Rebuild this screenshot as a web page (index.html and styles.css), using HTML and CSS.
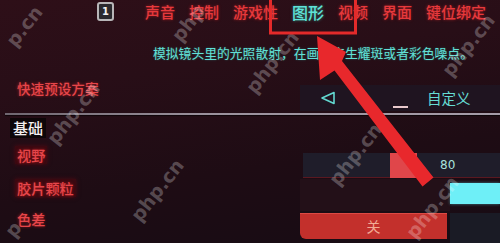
FILE: index.html
```html
<!DOCTYPE html>
<html lang="zh">
<head>
<meta charset="utf-8">
<title>图形设置</title>
<link rel="stylesheet" href="styles.css">
</head>
<body>
<div class="screen">
  <header class="topbar">
    <span class="key">1</span>
    <nav class="tabs">
      <span class="tab">声音</span>
      <span class="tab">控制</span>
      <span class="tab">游戏性</span>
      <span class="tab active">图形</span>
      <span class="tab">视频</span>
      <span class="tab">界面</span>
      <span class="tab">键位绑定</span>
    </nav>
  </header>

  <p class="desc">模拟镜头里的光照散射，在画面产生耀斑或者彩色噪点。</p>

  <section class="settings">
    <div class="row row-preset">
      <span class="label">快速预设方案</span>
      <div class="selector">
        <svg class="arrow-left" width="16" height="14" viewBox="0 0 16 14"><path d="M14 1.5 L2 7 L14 12.5 Z" fill="none" stroke="#62d8d0" stroke-width="1.6" stroke-linejoin="round"/></svg>
        <span class="dash"></span>
        <span class="value">自定义</span>
      </div>
    </div>

    <div class="divider"></div>

    <div class="group-title">基础</div>

    <div class="row row-fov">
      <span class="label label-box">视野</span>
      <div class="slider">
        <span class="thumb"></span>
        <span class="num">80</span>
      </div>
    </div>

    <div class="row row-grain">
      <span class="label label-box">胶片颗粒</span>
      <div class="grain-ctrl">
        <span class="grain-track"></span>
        <span class="grain-fill"></span>
      </div>
    </div>

    <div class="row row-ca">
      <span class="label">色差</span>
      <div class="toggle-ctrl">
        <span class="toggle">关</span>
        <span class="toggle-side"></span>
      </div>
    </div>
  </section>

  <div class="watermarks">
    <span class="wm wm1">p.cn</span>
    <span class="wm wm2">php</span>
    <span class="wm wm3">php.cn</span>
    <span class="wm wm4">php.cn</span>
    <span class="wm wm5">php.cn</span>
    <span class="wm wm6">php.cn</span>
    <span class="wm wm7">php.cn</span>
    <span class="wm wm8">php.cn</span>
    <span class="wm wm9">p</span>
  </div>

  <svg class="annot" width="500" height="243" viewBox="0 0 500 243">
    <rect x="270.5" y="-6" width="85" height="39" fill="none" stroke="#e42a2a" stroke-width="3"/>
    <polygon fill="#e8282c" points="317,36 346,52 342,61 433.5,177.5 422.5,186.5 334.5,70.5 320,80"/>
  </svg>
</div>
</body>
</html>
```

FILE: styles.css
```css
* { box-sizing: border-box; margin: 0; padding: 0; }

html, body {
  width: 500px;
  height: 243px;
  overflow: hidden;
}

body {
  font-family: "Noto Sans CJK SC", "Noto Sans", sans-serif;
  background: #1c0c13;
}

.screen {
  position: relative;
  width: 500px;
  height: 243px;
  overflow: hidden;
  background: linear-gradient(172deg, #2e0f18 0%, #280e17 30%, #1e0c14 65%, #170c14 100%);
}

/* top bar */
.topbar {
  display: flex;
  align-items: flex-start;
  height: 24px;
  padding: 2px 0 0 97px;
}

.key {
  width: 17px;
  height: 19px;
  border: 2px solid #b8b6b8;
  border-radius: 3px;
  background: #2a292e;
  color: #f2f2f2;
  font-family: "DejaVu Sans", sans-serif;
  font-weight: bold;
  font-size: 10px;
  line-height: 15px;
  text-align: center;
}

.tabs {
  display: flex;
  gap: 14px;
  margin-left: 31px;
  margin-top: 1px;
}

.tab {
  font-size: 15px;
  font-weight: 500;
  line-height: 18px;
  color: #e6393c;
  text-shadow: 0 0 3px rgba(255, 40, 40, 0.55);
}

.tab.active {
  color: #5fe2d8;
  text-shadow: 0 0 3px rgba(60, 230, 220, 0.5);
  font-size: 16px;
}

/* description */
.desc {
  margin-top: 21px;
  padding-left: 153px;
  font-size: 12.8px;
  line-height: 16px;
  color: #62e0d6;
  white-space: nowrap;
  text-shadow: 0 0 2px rgba(40, 220, 210, 0.4);
}

/* settings */
.settings {
  margin-top: 19px;
}

.row {
  display: grid;
  grid-template-columns: 300px 200px;
  align-items: start;
}

.label {
  justify-self: start;
  margin-left: 17px;
  font-size: 14.2px;
  font-weight: 500;
  line-height: 18px;
  color: #e6464a;
  text-shadow: 0 0 3px rgba(255, 40, 40, 0.6);
}

.label-box {
  padding: 0 2px;
  margin-left: 15px;
  background: rgba(70, 8, 16, 0.7);
  box-shadow: 0 0 4px rgba(90, 10, 20, 0.8);
}

.row-preset {
  height: 33px;
}

.row-preset .label {
  margin-top: -1px;
  font-size: 13.6px;
}

.selector {
  display: flex;
  align-items: center;
  height: 26px;
  margin-top: 5px;
  padding-left: 20px;
  background: #1f1420;
}

.arrow-left {
  flex: none;
}

.dash {
  width: 15px;
  height: 2px;
  margin-left: 57px;
  margin-top: 18px;
  background: #e8c8cc;
}

.value {
  margin-left: 19px;
  font-size: 14.5px;
  line-height: 18px;
  color: #66dcd4;
}

.divider {
  height: 2px;
  margin-left: 5px;
  background: linear-gradient(90deg, #6f6670 0%, #9a919c 40%, #a59ca8 100%);
  box-shadow: 0 1px 1px rgba(0, 0, 0, 0.6);
}

.group-title {
  display: inline-block;
  margin: 3px 0 0 10px;
  padding: 0 3px;
  height: 20px;
  font-size: 15px;
  font-weight: 500;
  line-height: 20px;
  color: #f4f0f0;
  background: #0e0709;
}

.row-fov {
  height: 40px;
}

.row-fov .label {
  margin-top: 7px;
}

.slider {
  display: flex;
  align-items: center;
  height: 25px;
  margin-top: 14px;
  margin-left: 3px;
  background: #1f1d2a;
  border-bottom: 1px solid #5a1820;
}

.thumb {
  width: 27px;
  height: 25px;
  margin-left: 87px;
  background: #e0464a;
}

.num {
  margin-left: 23px;
  font-family: "DejaVu Sans", sans-serif;
  font-size: 12px;
  color: #a8e2dc;
}

.row-grain {
  height: 32px;
}

.grain-ctrl {
  display: flex;
  height: 32px;
}

.grain-track {
  width: 150px;
  background: #231018;
}

.grain-fill {
  width: 50px;
  height: 21px;
  margin-top: 4px;
  background: #6eeff7;
  box-shadow: 0 0 3px rgba(110, 240, 250, 0.5);
}

.row-ca {
  height: 33px;
}

.row-ca .label {
  margin-top: -1px;
}

.toggle-ctrl {
  display: flex;
  gap: 3px;
  height: 33px;
  align-items: start;
}

.toggle {
  width: 147px;
  height: 26px;
  margin-top: 2px;
  border-top: 1px solid #dc4a44;
  border-radius: 0 0 0 6px;
  background: #c3302c;
  color: #f2aa94;
  font-size: 14px;
  line-height: 25px;
  text-align: center;
}

.toggle-side {
  width: 50px;
  height: 31px;
  margin-top: 2px;
  background: #1a1b25;
}

/* watermarks (overlay) */
.watermarks {
  position: absolute;
  inset: 0;
  pointer-events: none;
}

.wm {
  position: absolute;
  font-family: "DejaVu Sans", sans-serif;
  font-weight: bold;
  font-size: 19px;
  line-height: 20px;
  color: rgba(255, 255, 255, 0.26);
  transform: translate(-50%, -50%) rotate(-52deg);
  white-space: nowrap;
}

.wm1 { left: 24px;  top: 26px; }
.wm2 { left: 188px; top: 23px; }
.wm3 { left: 272px; top: 62px; }
.wm4 { left: 468px; top: 45px; }
.wm5 { left: 73px;  top: 113px; }
.wm6 { left: 355px; top: 154px; }
.wm7 { left: 157px; top: 190px; }
.wm8 { left: 432px; top: 207px; }
.wm9 { left: 13px;  top: 229px; }

/* annotation overlay */
.annot {
  position: absolute;
  left: 0;
  top: 0;
  pointer-events: none;
}
```
